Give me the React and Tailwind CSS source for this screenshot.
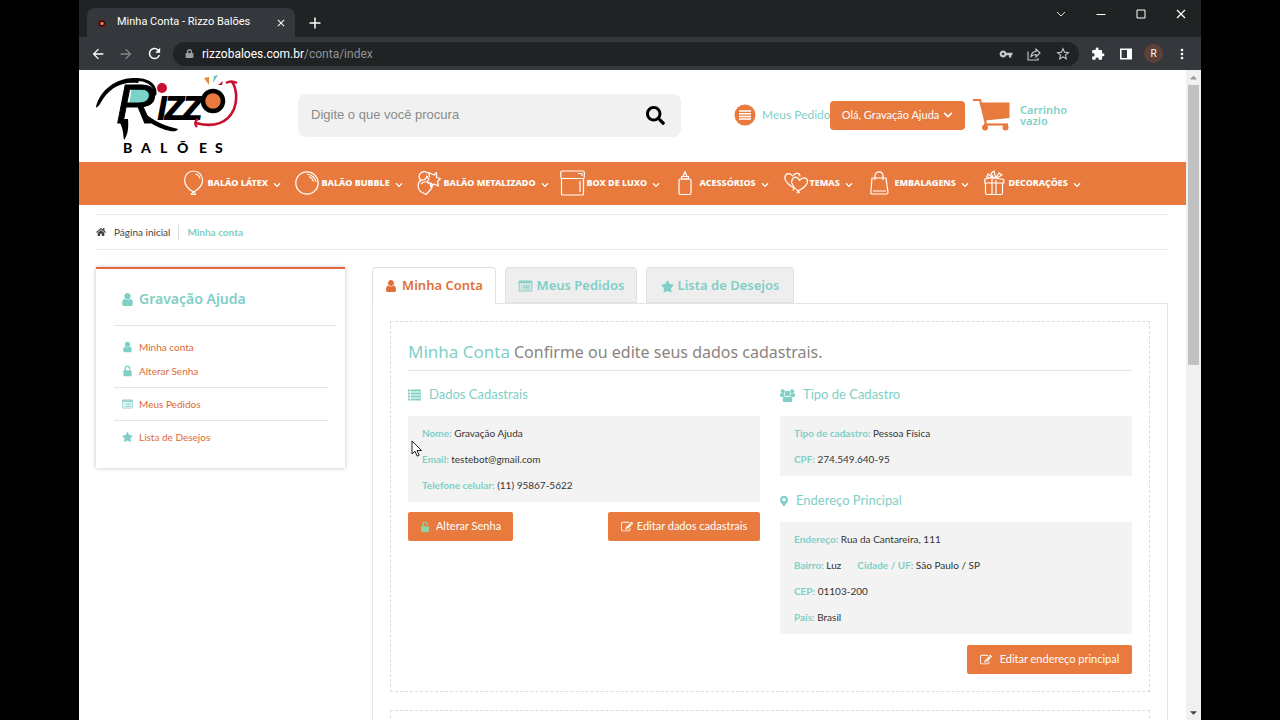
import {
  FaCaretDown,
  FaCaretUp,
  FaChevronDown,
  FaHome,
  FaLock,
  FaMapMarkerAlt,
  FaSearch,
  FaStar,
} from 'react-icons/fa';
import {
  MdArrowBack,
  MdArrowForward,
  MdClose,
  MdExtension,
  MdMoreVert,
  MdOutlineStarBorder,
  MdRefresh,
  MdVpnKey,
} from 'react-icons/md';

function UserIcon({ className }) {
  return (
    <svg viewBox="128 0 1536 1792" fill="currentColor" className={className}>
      <path d="M1536 1399q0 109-62.5 187t-150.5 78h-854q-88 0-150.5-78t-62.5-187q0-85 8.5-160.5t31.5-152 58.5-131 94-89 134.5-34.5q131 128 313 128t313-128q76 0 134.5 34.5t94 89 58.5 131 31.5 152 8.5 160.5zm-256-887q0 159-112.5 271.5t-271.5 112.5-271.5-112.5-112.5-271.5 112.5-271.5 271.5-112.5 271.5 112.5 112.5 271.5z" />
    </svg>
  );
}

function UsersIcon({ className }) {
  return (
    <svg viewBox="0 0 16 14" fill="currentColor" className={className}>
      <circle cx="3" cy="2.5" r="2.2" />
      <circle cx="13" cy="2.5" r="2.2" />
      <circle cx="8" cy="4.8" r="3" />
      <path d="M0 5.5q0-1 1-1h3.200q0 2 1.300 3.200-1.500 0-2.200 1H1.500Q0 8.700 0 7.500ZM16 5.500q0-1-1-1h-3.200q0 2-1.300 3.200 1.500 0 2.200 1h1.800q1.500 0 1.500-1.200Z" />
      <path d="M5.200 8.200q2.800 1.400 5.600 0 2.400.3 2.400 3.800 0 2-1.700 2h-7q-1.700 0-1.700-2 0-3.500 2.400-3.800Z" />
    </svg>
  );
}

function EditIcon({ className }) {
  return (
    <svg viewBox="0 0 1792 1792" fill="currentColor" className={className}>
      <path d="M888 1184l116-116-152-152-116 116v56h96v96h56zm440-720q-16-16-33 1l-350 350q-17 17-1 33t33-1l350-350q17-17 1-33zm80 594v190q0 119-84.5 203.5t-203.5 84.5h-832q-119 0-203.5-84.5t-84.5-203.5v-832q0-119 84.5-203.5t203.5-84.5h832q63 0 117 25 15 7 18 23 3 17-9 29l-49 49q-14 14-32 8-23-6-45-6h-832q-66 0-113 47t-47 113v832q0 66 47 113t113 47h832q66 0 113-47t47-113v-126q0-13 9-22l64-64q15-15 35-7t20 29zm-96-738l288 288-672 672h-288v-288zm444 132l-92 92-288-288 92-92q28-28 68-28t68 28l152 152q28 28 28 68t-28 68z" />
    </svg>
  );
}

function UnlockIcon({ className }) {
  return (
    <svg viewBox="0 0 14 16" fill="none" className={className}>
      <rect x="1.5" y="7" width="11" height="8" rx="1" fill="currentColor" />
      <path d="M4 8V4.500a3 3 0 0 1 6 0V5.500" stroke="currentColor" strokeWidth="1.9" />
    </svg>
  );
}

function ListAltIcon({ className }) {
  return (
    <svg viewBox="0 0 16 14" fill="none" stroke="currentColor" className={className}>
      <rect x="0.6" y="1.1" width="14.8" height="11.8" rx="1" strokeWidth="1.2" />
      <path d="M0.600 2.700h14.800" strokeWidth="2.2" />
      <path d="M2.500 6h1.500M2.500 8.300h1.500M2.500 10.600h1.500M5 6h8.500M5 8.300h8.500M5 10.600h8.500" strokeWidth="1.2" />
    </svg>
  );
}

function ListIcon({ className }) {
  return (
    <svg viewBox="0 0 13 12" stroke="currentColor" strokeWidth="2" className={className}>
      <path d="M0 1.500h2.200M0 4.500h2.200M0 7.500h2.200M0 10.500h2.200M3 1.500h10M3 4.500h10M3 7.500h10M3 10.500h10" />
    </svg>
  );
}

function Logo() {
  return (
    <svg viewBox="0 0 142 84" className="h-[84px] w-[142px] shrink-0" role="img" aria-label="Rizzo Balões">
      <path d="M36 12C52 10 58 16 56 24C54 31 46 34 33 34Z" fill="#7ad4c9" />
      <path d="M0 34C4 17 20 5 38 5c4 0 6 3 4 5C24 8 12 16 4 31c-2 3-4 4-4 3Z" />
      <path d="M36 7C48 5 60 10 59 21" fill="none" stroke="#000" strokeWidth="3" strokeLinecap="round" />
      <text
        x="20"
        y="50"
        fontFamily="Liberation Sans, sans-serif"
        fontStyle="italic"
        fontSize="56"
        stroke="#000"
        strokeWidth="1"
      >
        R
      </text>
      <path d="M22 46C28 56 27 62 28 67c3-4 5-10 4-21Z" />
      <path d="M46 38C58 49 70 53 82 56c-2 5-14 1-22-3-8-4-12-8-14-15Z" />
      <text
        x="61 69 87"
        y="46"
        fontFamily="Liberation Sans, sans-serif"
        fontStyle="italic"
        fontSize="40"
        stroke="#000"
        strokeWidth="2"
      >
        ızz
      </text>
      <circle cx="66" cy="15" r="5" fill="#c8102e" />
      <circle cx="117" cy="28" r="10" fill="#e87a3e" stroke="#000" strokeWidth="4.5" />
      <path d="M108 5l5 7V4Z" fill="#e08a3c" />
      <path d="M117 10l1-7 4-1Z" fill="#63c6c0" />
      <path d="M122 12l5-4-1 4Z" fill="#c8102e" />
      <path d="M100 50C118 55 132 50 138 36C142 26 140 14 136 9" fill="none" stroke="#c8102e" strokeWidth="2.6" />
      <path d="M130 10q5-3 11 0M101 54C98 51 99 48 102 46" fill="none" stroke="#c8102e" strokeWidth="2.4" />
      <text x="27 45 64 81 103 119" y="80" fontFamily="Lato, sans-serif" fontWeight="900" fontSize="14">
        BALÕES
      </text>
    </svg>
  );
}

function CartIcon() {
  return (
    <svg viewBox="0 0 37 32" className="h-8 w-[37px] shrink-0" fill="#e87a3e">
      <path d="M0 1h7l6 24" fill="none" stroke="#e87a3e" strokeWidth="2.2" />
      <path d="M8 3.500h28.500v15.500L12 21.500Z" />
      <path d="M11 25.500h24" stroke="#e87a3e" strokeWidth="2.2" />
      <circle cx="12" cy="28.5" r="3" />
      <circle cx="32.5" cy="28.5" r="3" />
    </svg>
  );
}

function NavIcon({ children }) {
  return (
    <svg
      viewBox="0 0 26 26"
      className="size-[26px] shrink-0"
      fill="none"
      stroke="#fff"
      strokeWidth="1.2"
      strokeLinejoin="round"
    >
      {children}
    </svg>
  );
}

const latex = (
  <NavIcon>
    <path d="M9.500 22C4 19 0.600 15 0.600 10a9 9 0 0 1 18 0c0 5-3.500 9-9 12ZM7 24.500l2.500-2.500 2.500 2.500M7 24.500h5" />
    <path d="M11.500 4c2.500.5 4 2 4.500 4.500" />
  </NavIcon>
);
const bubble = (
  <NavIcon>
    <circle cx="12" cy="13" r="11.2" />
    <path d="M12 4c5 .5 8.500 4 9 8M14 6.500c2.500 1 4 3 4.500 5" />
  </NavIcon>
);
const metalizado = (
  <NavIcon>
    <path d="M12 4C10 .5 4 1 2.500 4.500S4 10 4 10C0 13 .5 19 3.500 21.500L9 24.500l5-5.500c1.500-2 1.500-4 .5-6M4 10c4 .5 6-2 5.500-4l2.500 3-2 3 3.500 1v3.500l3.500-2.500 4.500 2-1-4.500 3-3-4-1V2.500L17 5l-5-2.500.5 4.500M4 14c3-3 6-3 8 0" />
  </NavIcon>
);
const box = (
  <NavIcon>
    <path d="M1.500 8.500v15.500q0 1 1 1h20q1 0 1-1V8.500" />
    <rect x="0.8" y="1" width="23.5" height="7.5" rx="1.5" />
    <path d="M20 11v11M18 3.500h4V6" />
  </NavIcon>
);
const acessorios = (
  <NavIcon>
    <rect x="1" y="9" width="12" height="15.5" rx="1.5" />
    <path d="M3.500 9V6.500h7V9M5 6.500L7 1.500l2 5M3 9h8" />
  </NavIcon>
);
const temas = (
  <NavIcon>
    <path d="M10 18C4 15 0 10 1 6.500c1-3.500 5.500-4 7.500-.5C12 2 16 3 16 6.500" />
    <path d="M14 21C8.500 17 6.500 12 8.500 9c2-3 6-2 7 1.500C18 7 22.500 7 23.500 10.500c.5 3.500-3.500 7.500-9.500 10.500ZM13 23.500l1-2.500 2 2M10 18l-1 2.500" />
  </NavIcon>
);
const embalagens = (
  <NavIcon>
    <path d="M2 8h14l2 14.500q0 1.500-1.500 1.500h-14Q.8 24 .8 22.500ZM5 10V6c0-5.500 8-5.500 8 0v4M3 21h13" />
  </NavIcon>
);
const decoracoes = (
  <NavIcon>
    <path d="M1.500 13v10q0 1.500 1.500 1.500h14q1.500 0 1.500-1.500V13M.8 9l7.500-1.500 11.500 2v3.500H.8ZM8 9v15M12 10v14.500M10 8.500L2.500 7 4 4l6 4.500L7 3.500 10 1l1.500 7L15 3l3 2-6.500 3.500" />
  </NavIcon>
);

const menu = [
  { label: 'BALÃO LÁTEX', icon: latex, width: 'w-[111px]', slot: 'w-6' },
  { label: 'BALÃO BUBBLE', icon: bubble, width: 'w-[122px]', slot: 'w-[27px]' },
  { label: 'BALÃO METALIZADO', icon: metalizado, width: 'w-[143px]', slot: 'w-[27px]' },
  { label: 'BOX DE LUXO', icon: box, width: 'w-[118px]', slot: 'w-[27px]' },
  { label: 'ACESSÓRIOS', icon: acessorios, width: 'w-[106px]', slot: 'w-[22px]' },
  { label: 'TEMAS', icon: temas, width: 'w-[86px]', slot: 'w-[26px]' },
  { label: 'EMBALAGENS', icon: embalagens, width: 'w-[114px]', slot: 'w-[25px]' },
  { label: 'DECORAÇÕES', icon: decoracoes, width: 'w-[112px]', slot: 'w-[25px]' },
];

function BrowserBar() {
  return (
    <div className="shrink-0 bg-[#1f2324] font-['Roboto',sans-serif] text-white">
      <div className="flex h-[37px] items-end pl-2">
        <div className="flex h-[29px] w-[208px] items-center rounded-t-lg bg-[#34373b] pr-2 pl-[10px]">
          <svg viewBox="0 0 12 12" className="mr-2 size-3">
            <circle cx="5" cy="6.5" r="3.5" fill="#111" stroke="#7a1420" />
            <circle cx="5" cy="6.5" r="1.8" fill="#e87a3e" />
          </svg>
          <span className="flex-1 text-[11px] whitespace-nowrap">Minha Conta - Rizzo Balões</span>
          <button aria-label="Fechar guia">
            <MdClose className="size-3" />
          </button>
        </div>
        <button aria-label="Nova guia" className="mb-2 ml-[14px]">
          <svg viewBox="0 0 12 12" className="size-3" stroke="#fff" strokeWidth="1.5">
            <path d="M6 .5v11M.5 6h11" />
          </svg>
        </button>
        <div className="mr-[15px] mb-[18px] ml-auto flex items-center gap-[30px]">
          <button aria-label="Pesquisar guias">
            <svg viewBox="0 0 10 10" className="size-[10px]" fill="none" stroke="#ddd">
              <path d="M1 3l4 4 4-4" />
            </svg>
          </button>
          <button aria-label="Minimizar">
            <svg viewBox="0 0 10 10" className="size-[10px]" stroke="#fff">
              <path d="M.5 5.500h9" />
            </svg>
          </button>
          <button aria-label="Maximizar">
            <svg viewBox="0 0 10 10" className="size-[10px]" fill="none" stroke="#fff">
              <path d="M1 1h8v8H1z" />
            </svg>
          </button>
          <button aria-label="Fechar">
            <svg viewBox="0 0 10 10" className="size-[10px]" stroke="#fff" strokeWidth="1.2">
              <path d="M1 1l8 8M9 1L1 9" />
            </svg>
          </button>
        </div>
      </div>
      <div className="flex h-[33px] items-center bg-[#34373b] px-[11px]">
        <button aria-label="Voltar"><MdArrowBack className="size-4" /></button>
        <button aria-label="Avançar" className="ml-3 text-[#85888c]"><MdArrowForward className="size-4" /></button>
        <button aria-label="Recarregar" className="ml-3"><MdRefresh className="size-[17px]" /></button>
        <div className="ml-[10px] flex h-6 flex-1 items-center rounded-full bg-[#1f2324] px-3">
          <FaLock className="mr-2 size-[9px] text-[#9a9da1]" />
          <span className="flex-1 text-xs text-[#8f9296]">
            <span className="text-white">rizzobaloes.com.br</span>/conta/index
          </span>
          <div className="flex items-center gap-[14px] text-[#c6c8ca]">
            <MdVpnKey className="size-[14px]" />
            <svg viewBox="0 0 14 14" className="size-[14px]" fill="none" stroke="currentColor" strokeWidth="1.1">
              <path d="M1 4.500v8.500h10v-2M4 9.500c.5-3.500 2.500-5 5-5V2l4 4-4 4V7.500c-2 0-3.500.5-5 2Z" />
            </svg>
            <MdOutlineStarBorder className="-mr-1 size-4" />
          </div>
        </div>
        <div className="ml-3 flex items-center">
          <MdExtension className="size-[14px]" />
          <svg viewBox="0 0 12 12" className="ml-[15px] size-3">
            <path d="M.8 1.200h10.400v9.600H.8z" fill="none" stroke="#fff" strokeWidth="1.6" />
            <path d="M7 1h4v10H7z" fill="#fff" />
          </svg>
          <span className="ml-3 flex size-[19px] items-center justify-center rounded-full bg-[#5d4037] text-[10px]">R</span>
          <button aria-label="Menu" className="ml-[11px]"><MdMoreVert className="size-4" /></button>
        </div>
      </div>
    </div>
  );
}

function Header() {
  return (
    <header className="flex h-[92px] items-center pb-[2px] pl-[17px]">
      <Logo />
      <form className="ml-[60px] flex h-[43px] max-w-[383px] flex-1 items-center rounded-lg bg-[#f1f1f1] pr-4 pl-[13px]">
        <input
          type="text"
          aria-label="Buscar"
          placeholder="Digite o que você procura"
          className="min-w-0 flex-1 bg-transparent font-['Liberation_Sans',sans-serif] text-[13px] text-[#555] outline-none placeholder:text-[#8a8a8a]"
        />
        <button type="button" aria-label="Pesquisar">
          <FaSearch className="size-[19px] text-black" />
        </button>
      </form>
      <a href="#pedidos" className="ml-[53px] flex w-24 items-center text-xs whitespace-nowrap text-[#7fcfc6]">
        <svg viewBox="0 0 22 22" className="mr-[6px] size-[22px] shrink-0">
          <circle cx="11" cy="11" r="10.5" fill="#e87a3e" />
          <path d="M5 7h12M5 9.700h12M5 12.400h12M5 15.100h12" stroke="#fff" strokeWidth="1.5" />
        </svg>
        Meus Pedido
      </a>
      <button className="flex h-[29px] w-[135px] items-center justify-center gap-1 rounded-sm bg-[#e87a3e] text-[11px] whitespace-nowrap text-white">
        Olá, Gravação Ajuda
        <FaChevronDown className="size-[10px]" />
      </button>
      <a href="#carrinho" className="ml-2 flex items-center gap-[10px] font-['Noto_Sans',sans-serif] text-[11px] leading-[11px] font-semibold text-[#7fcfc6]">
        <CartIcon />
        <span className="w-[50px]">Carrinho vazio</span>
      </a>
    </header>
  );
}

function Field({ label, children }) {
  return (
    <p className="text-[10px] leading-[26px] text-[#333]">
      <strong className="font-bold text-[#7fcfc6]">{label}:</strong> {children}
    </p>
  );
}

function Heading({ icon, children }) {
  return (
    <h3 className="flex h-5 items-center gap-2 text-[13px] text-[#7fcfc6]">
      {icon}
      {children}
    </h3>
  );
}

function Button({ icon, className, children }) {
  return (
    <button className={`flex h-[29px] items-center justify-center rounded-xs bg-[#e87a3e] text-[11px] whitespace-nowrap text-white ${className}`}>
      {icon}
      {children}
    </button>
  );
}

function Sidebar() {
  const link = 'flex h-6 items-center text-[10px] text-[#dc6a38]';
  return (
    <aside className="w-[249px] shrink-0 self-start border-t-2 border-[#e0683a] bg-white pb-[15px] pl-[18px] shadow-[0_0_4px_rgba(0,0,0,0.25)]">
      <h2 className="mr-2 flex h-[57px] items-center border-b border-[#e5e5e5] pt-1 pl-[7px] font-['Noto_Sans',sans-serif] text-sm font-semibold text-[#7fcfc6]">
        <UserIcon className="mr-[5px] h-[15px] w-[13px]" />
        Gravação Ajuda
      </h2>
      <ul className="mr-[17px] pt-[9px]">
        <li><a href="#conta" className={link}><UserIcon className="mr-[6px] ml-2 h-3 w-[11px] text-[#7fcfc6]" />Minha conta</a></li>
        <li><a href="#senha" className={link}><UnlockIcon className="mr-[6px] ml-2 h-3 w-[11px] text-[#7fcfc6]" />Alterar Senha</a></li>
        <li className="mt-1 border-t border-[#e5e5e5] py-1"><a href="#pedidos" className={link}><ListAltIcon className="mr-[6px] ml-2 h-3 w-[11px] text-[#7fcfc6]" />Meus Pedidos</a></li>
        <li className="border-t border-[#e5e5e5] py-1"><a href="#desejos" className={link}><FaStar className="mr-[6px] ml-2 h-3 w-[11px] text-[#7fcfc6]" />Lista de Desejos</a></li>
      </ul>
    </aside>
  );
}

function Account() {
  const tab = 'flex h-9 items-center justify-center gap-1 rounded-t-sm border border-[#e0e0e0] bg-[#eeeeee] pt-[2px] font-semibold whitespace-nowrap text-[#7fcfc6]';
  return (
    <section className="min-w-0 flex-1">
      <div className="flex gap-[9px] font-['Noto_Sans',sans-serif] text-[13px]">
        <button className="relative -mb-px flex h-[37px] w-[124px] items-center justify-center gap-[5px] rounded-t-sm border border-b-0 border-[#e0e0e0] bg-white font-semibold whitespace-nowrap text-[#e0703a]">
          <UserIcon className="h-[14px] w-3" />
          Minha Conta
        </button>
        <button className={`${tab} w-[132px]`}>
          <ListAltIcon className="h-3 w-[15px]" />
          Meus Pedidos
        </button>
        <button className={`${tab} w-[148px]`}>
          <FaStar className="size-[13px]" />
          Lista de Desejos
        </button>
      </div>
      <div className="border border-[#e5e5e5] p-[17px]">
        <div className="border border-dashed border-[#dcdcdc] px-[17px] pt-[15px] pb-[17px]">
          <h1 className="flex h-[34px] items-center gap-1 border-b border-[#e5e5e5] pb-1 font-['Noto_Sans',sans-serif] text-base whitespace-nowrap text-[#8a8580]">
            <span className="text-[17px] text-[#7fcfc6]">Minha Conta</span>
            Confirme ou edite seus dados cadastrais.
          </h1>
          <div className="mt-[14px] grid grid-cols-2 gap-5">
            <div>
              <Heading icon={<ListIcon className="h-3 w-[13px]" />}>Dados Cadastrais</Heading>
              <div className="relative mt-[11px] bg-[#f3f3f3] px-[14px] py-1">
                <Field label="Nome">Gravação Ajuda</Field>
                <Field label="Email">testebot@gmail.com</Field>
                <Field label="Telefone celular">(11) 95867-5622</Field>
                <svg viewBox="0 0 12 18" className="absolute top-6 left-[3px] h-[18px] w-3">
                  <path d="M1 1v13l3-2.800 2.200 5 2-1-2.200-4.700h4.500Z" fill="#fff" stroke="#222" />
                </svg>
              </div>
              <div className="mt-[10px] flex justify-between">
                <Button className="w-[105px]" icon={<UnlockIcon className="mr-[6px] h-3 w-[10px] text-[#8fd3a8]" />}>
                  Alterar Senha
                </Button>
                <Button className="w-[152px]" icon={<EditIcon className="mr-1 size-3" />}>
                  Editar dados cadastrais
                </Button>
              </div>
            </div>
            <div>
              <Heading icon={<UsersIcon className="h-[13px] w-[15px]" />}>Tipo de Cadastro</Heading>
              <div className="mt-[11px] bg-[#f3f3f3] px-[14px] py-1">
                <Field label="Tipo de cadastro">Pessoa Física</Field>
                <Field label="CPF">274.549.640-95</Field>
              </div>
              <div className="mt-[15px]">
                <Heading icon={<FaMapMarkerAlt className="h-3 w-2" />}>Endereço Principal</Heading>
              </div>
              <div className="mt-[11px] bg-[#f3f3f3] px-[14px] py-1">
                <Field label="Endereço">Rua da Cantareira, 111</Field>
                <div className="flex gap-4">
                  <Field label="Bairro">Luz</Field>
                  <Field label="Cidade / UF">São Paulo / SP</Field>
                </div>
                <Field label="CEP">01103-200</Field>
                <Field label="País">Brasil</Field>
              </div>
              <Button className="mt-[11px] ml-auto w-[165px]" icon={<EditIcon className="mr-2 size-3" />}>
                Editar endereço principal
              </Button>
            </div>
          </div>
        </div>
        <div className="mt-[18px] h-40 border border-dashed border-[#dcdcdc]" />
      </div>
    </section>
  );
}

export default function App() {
  return (
    <div className="h-screen bg-black px-[79px] font-['Lato',sans-serif]">
      <div className="flex h-full flex-col overflow-hidden bg-white">
        <BrowserBar />
        <div className="flex min-h-0 flex-1">
          <div className="min-w-0 flex-1 overflow-hidden">
            <Header />
            <nav className="flex h-[43px] justify-center bg-[#e87a3e] pl-[14px] font-['Noto_Sans',sans-serif]">
              {menu.map((item) => (
                <a
                  key={item.label}
                  href="#categoria"
                  className={`flex items-center pb-[2px] text-[9px] font-extrabold whitespace-nowrap text-white ${item.width}`}
                >
                  <span className={`shrink-0 ${item.slot}`}>{item.icon}</span>
                  {item.label}
                  <FaChevronDown className="mt-1 ml-[5px] size-2 shrink-0" />
                </a>
              ))}
            </nav>
            <div className="pt-[9px] pr-[18px] pl-[17px]">
              <div className="flex h-9 items-center border-y border-[#e8e8e8] text-[10px]">
                <FaHome className="mr-2 size-[10px] text-[#444]" />
                <a href="#inicio" className="border-r border-[#ddd] pr-2 text-[#444]">Página inicial</a>
                <a href="#conta" className="pl-2 font-bold text-[#7fcfc6]">Minha conta</a>
              </div>
              <div className="mt-[17px] flex gap-[27px]">
                <Sidebar />
                <Account />
              </div>
            </div>
          </div>
          <div className="flex w-[15px] shrink-0 flex-col items-center bg-[#f1f1f1]">
            <FaCaretUp className="my-[2px] size-[11px] shrink-0 text-[#999]" />
            <div className="h-[43%] w-[11px] bg-[#c1c1c1]" />
            <FaCaretDown className="mt-auto mb-[2px] size-[11px] shrink-0 text-[#444]" />
          </div>
        </div>
      </div>
    </div>
  );
}
